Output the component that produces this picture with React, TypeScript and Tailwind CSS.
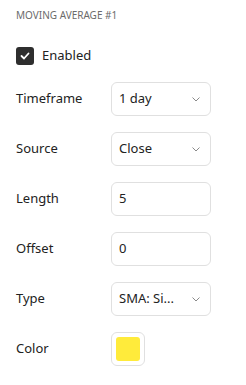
import React from 'react';

const Chevron = () => (
  <svg width="8" height="5" viewBox="0 0 8 5" className="shrink-0">
    <polyline points="0.5,0.5 4,4 7.5,0.5" fill="none" stroke="#8a8a8a" strokeWidth="1" />
  </svg>
);

function Row({ label, children }: { label: string; children: React.ReactNode }) {
  return (
    <div className="flex items-center h-[34px]">
      <div className="w-[95px] text-[13px] text-[#222]">{label}</div>
      {children}
    </div>
  );
}

function Select({ value }: { value: string }) {
  return (
    <div className="w-[100px] h-[34px] border border-[#e0e0e0] rounded-[6px] flex items-center justify-between pl-[7px] pr-[10px] text-[13px] text-[#222] bg-white">
      <span>{value}</span>
      <Chevron />
    </div>
  );
}

function Input({ value }: { value: string }) {
  return (
    <div className="w-[100px] h-[34px] border border-[#e0e0e0] rounded-[6px] flex items-center pl-[7px] text-[13px] text-[#222] bg-white">
      {value}
    </div>
  );
}

export default function App() {
  return (
    <div className="w-[246px] h-[385px] bg-white px-4 pt-[8px]" style={{ fontFamily: '"Noto Sans", "Open Sans", sans-serif' }}>
      <div className="h-[15px] leading-[15px] text-[10px] text-[#6b6b6b]">MOVING AVERAGE #1</div>

      <div className="mt-[24px] h-[18px] flex items-center gap-2">
        <div className="w-[18px] h-[18px] rounded-[3px] bg-[#2e2e2e] flex items-center justify-center">
          <svg width="10" height="8" viewBox="0 0 10 8">
            <polyline points="1.5,4 4,6.5 8.5,1.5" fill="none" stroke="#fff" strokeWidth="1.8" strokeLinecap="round" strokeLinejoin="round" />
          </svg>
        </div>
        <span className="text-[13px] text-[#222]">Enabled</span>
      </div>

      <div className="mt-[17px] flex flex-col gap-4">
        <Row label="Timeframe"><Select value="1 day" /></Row>
        <Row label="Source"><Select value="Close" /></Row>
        <Row label="Length"><Input value="5" /></Row>
        <Row label="Offset"><Input value="0" /></Row>
        <Row label="Type"><Select value="SMA: Si..." /></Row>
        <Row label="Color">
          <div className="w-[34px] h-[34px] border border-[#e0e0e0] rounded-[6px] flex items-center justify-center bg-white">
            <div className="w-[24px] h-[24px] rounded-[3px] bg-[#ffeb3b]" />
          </div>
        </Row>
      </div>
    </div>
  );
}
